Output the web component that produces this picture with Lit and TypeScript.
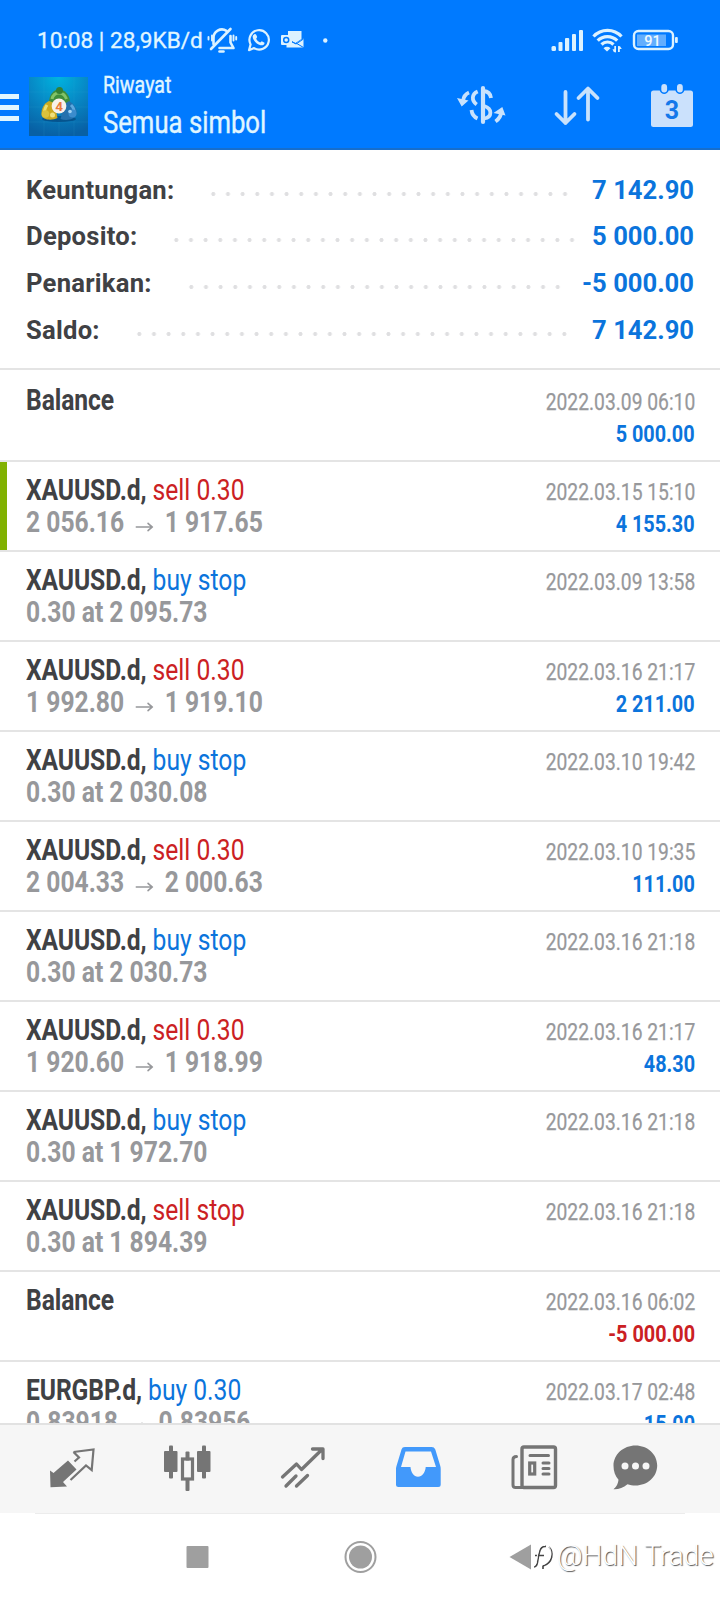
import { LitElement, html, css, svg } from "lit";
import { customElement } from "lit/decorators.js";

type Row = { s: string; side?: string; cls?: string; l2?: string; t: string; v?: string; neg?: boolean; mark?: boolean };

const rows: Row[] = [
  { s: "Balance", t: "2022.03.09 06:10", v: "5 000.00" },
  { s: "XAUUSD.d,", side: "sell 0.30", cls: "red", l2: "2 056.16|1 917.65", t: "2022.03.15 15:10", v: "4 155.30", mark: true },
  { s: "XAUUSD.d,", side: "buy stop", cls: "blue", l2: "0.30 at 2 095.73", t: "2022.03.09 13:58" },
  { s: "XAUUSD.d,", side: "sell 0.30", cls: "red", l2: "1 992.80|1 919.10", t: "2022.03.16 21:17", v: "2 211.00" },
  { s: "XAUUSD.d,", side: "buy stop", cls: "blue", l2: "0.30 at 2 030.08", t: "2022.03.10 19:42" },
  { s: "XAUUSD.d,", side: "sell 0.30", cls: "red", l2: "2 004.33|2 000.63", t: "2022.03.10 19:35", v: "111.00" },
  { s: "XAUUSD.d,", side: "buy stop", cls: "blue", l2: "0.30 at 2 030.73", t: "2022.03.16 21:18" },
  { s: "XAUUSD.d,", side: "sell 0.30", cls: "red", l2: "1 920.60|1 918.99", t: "2022.03.16 21:17", v: "48.30" },
  { s: "XAUUSD.d,", side: "buy stop", cls: "blue", l2: "0.30 at 1 972.70", t: "2022.03.16 21:18" },
  { s: "XAUUSD.d,", side: "sell stop", cls: "red", l2: "0.30 at 1 894.39", t: "2022.03.16 21:18" },
  { s: "Balance", t: "2022.03.16 06:02", v: "-5 000.00", neg: true },
  { s: "EURGBP.d,", side: "buy 0.30", cls: "blue", l2: "0.83918|0.83956", t: "2022.03.17 02:48", v: "15.00" },
];

const summary = [
  ["Keuntungan:", "7 142.90"],
  ["Deposito:", "5 000.00"],
  ["Penarikan:", "-5 000.00"],
  ["Saldo:", "7 142.90"],
];

const icon = (x: number, y: number, w: number, h: number, body: unknown) =>
  html`<svg width=${w} height=${h} viewBox="${x} ${y} ${w} ${h}" fill="none">${body}</svg>`;

const statusIcons = svg`
  <g stroke="#dcf2ff" stroke-width="2.600" stroke-linecap="round" stroke-linejoin="round">
    <path d="M213.500 44v-5.500a8.500 8.500 0 0 1 13-7.700M230.500 36v6.500l3 5.500h-14"/>
    <path d="M211 49L230.500 29"/><path d="M219.500 51.500h4"/>
    <path d="M212 35.500v5M208.500 37v2.500M233.500 35.500v5M236.200 37v2.500" stroke-width="1.900"/>
  </g>
  <path d="M249 50.200l1.600-5.800a9.700 9.700 0 1 1 3.500 3.700z" stroke="#dcf2ff" stroke-width="2.200" stroke-linejoin="round"/>
  <path d="M254 34.500c1.500-1 2.200-.2 3.200 2.600l-1 1.700c.9 1.800 2 2.900 4 3.700l1.600-1.300 2.700 1.500c.3 2.300-2.100 3-4 2.500-4.200-1.200-8-5.300-7.800-8.700 0-.9.500-1.500 1.300-2z" fill="#dcf2ff"/>
  <path d="M288 31h13.500v8l-6 4-7.500-4z" fill="#dcf2ff"/><path d="M286.500 47.500V40l9 4 7.500-4.500v8zM303.500 38.500v9l-7-4.500z" fill="#dcf2ff"/>
  <path d="M296 43l7.500 4.500M289 40l7 4 7.500-5" stroke="#0079fd"/>
  <rect x="281" y="35" width="11" height="10" rx="1" fill="#dcf2ff"/><circle cx="286.200" cy="40" r="2.500" stroke="#0079fd" stroke-width="1.500"/>
  <circle cx="325.300" cy="40.500" r="2.200" fill="#dcf2ff"/>`;

const signalIcons = svg`
  <g fill="#dcf2ff">
    <rect x="551.500" y="46" width="4.500" height="5" rx="1.500"/><rect x="558.500" y="42" width="4" height="9" rx="1"/>
    <rect x="565" y="38" width="4.200" height="13" rx="1"/><rect x="572" y="34" width="4" height="17" rx="1"/><rect x="579" y="30" width="4" height="21" rx="1"/>
    <path d="M607 51.500l-3.500-3.300a5 5 0 0 1 7 0z"/>
    <path d="M616 46v6.500l-2.200-.4-1.300-2.900h1.800V46zM618 52v-6l2 .3 1.800 2.700h-2V52z"/>
  </g>
  <g stroke="#dcf2ff" stroke-width="3.200"><path d="M593.500 36.500a19 19 0 0 1 28 0M597.700 40.700a13.500 13.500 0 0 1 19.500 0M601.500 44.500a8.500 8.500 0 0 1 12 0"/></g>
  <rect x="634" y="31" width="39" height="18" rx="4.500" stroke="#dcf2ff" stroke-width="2.400"/>
  <rect x="637" y="34.500" width="29" height="11.500" fill="#62aefe"/><rect x="675" y="37" width="2.800" height="6" rx="1" fill="#dcf2ff"/>
  <text x="652.500" y="46" text-anchor="middle" font-family="Roboto" font-weight="500" font-size="14.500" fill="#eefaff">91</text>`;

const logo = svg`
  <defs><radialGradient id="bg" cx=".5" cy="0" r="1"><stop offset="0" stop-color="#00b4df"/><stop offset=".5" stop-color="#0788c5"/><stop offset="1" stop-color="#0860a4"/></radialGradient></defs>
  <rect x="29" y="77" width="59" height="59" fill="url(#bg)"/>
  <path d="M29 92h59M29 107h59M29 122h59M44 77v59M59 77v59M74 77v59" stroke="#3bb0dc" stroke-opacity=".18" stroke-width=".8"/>
  <ellipse cx="59" cy="119" rx="17" ry="3" fill="#043e75" opacity=".6"/>
  <path d="M49 103c0-9 5-13.500 10-13.500s10.500 4.500 11 12l-6 6H53z" fill="#3f8e3a"/><path d="M52 99c1-4 4-6 7-6s6 2 7.500 6" stroke="#83c367" stroke-width="3"/><circle cx="59.500" cy="90.500" r="3.500" fill="#348034"/>
  <path d="M49 101c-5 2-8 8-7.500 14 1 5 10 6 16 3l-3-15z" fill="#cbaa20"/><path d="M47 105c-2 3-3 6-2 9" stroke="#ecdf70" stroke-width="3"/><circle cx="45.500" cy="114" r="3.800" fill="#d9c23c"/><circle cx="52.500" cy="115" r="2.500" fill="#efe07c"/>
  <path d="M69 101c5 3 8.500 8 7.500 13-2 6-10 7-16 5l4-15z" fill="#2471ae"/><path d="M71 105c2 2 3.500 5 3 8" stroke="#5ca9df" stroke-width="3"/><circle cx="72.500" cy="113.500" r="4" fill="#3b8ccd"/><circle cx="70" cy="111.500" r="1.800" fill="#a3d4f4"/>
  <circle cx="59" cy="106" r="7.400" fill="#f7f1ea"/>
  <text x="59" y="111" text-anchor="middle" font-family="Roboto" font-weight="700" font-size="13.500" fill="#ea7a3c">4</text>`;

const currency = svg`
  <g stroke="#c9e2fc" stroke-width="3.800">
    <path d="M483 88v34" stroke-width="4.200" stroke-linecap="round"/>
    <path d="M483.500 91c4 .3 7 2.600 7.500 7M477.700 91.500c-6 2.500-6.500 9-1 13M484 106c8.500 2.500 8.500 11 0 12.500M471.500 110c.5 4.500 2.500 7 6 8.500"/>
    <path d="M469 92.500c-3.500 1.500-5.500 4.500-6 8.500M495.500 121.500c3.500-2.500 5.500-5.500 5.800-9.500"/>
  </g>
  <path d="M457 98l11.500 2.500-6.800 6zM493.500 113l8.800-6 3.200 8.500z" fill="#c9e2fc"/>`;

const sort = svg`<path d="M565.500 92v31M556.500 114l9 9 9-9M588 119.500V89M578.500 98l9.500-9.500 9.500 9.500" stroke="#c9e2fc" stroke-width="3.800" stroke-linecap="round" stroke-linejoin="round"/>`;

const calendar = svg`
  <path d="M653.500 90.500h6.200c.8 2.300 2.500 3.500 4.500 3.500s3.700-1.200 4.500-3.500h6.700c.8 2.300 2.500 3.500 4.500 3.500s3.700-1.200 4.500-3.500h6.100a2.500 2.500 0 0 1 2.500 2.500v31.500a2.500 2.500 0 0 1-2.500 2.500h-37a2.500 2.500 0 0 1-2.500-2.500V93a2.500 2.500 0 0 1 2.500-2.500z" fill="#cbe1fc"/>
  <rect x="661.300" y="84" width="5.800" height="8.500" rx="2.900" fill="#cbe1fc"/><rect x="677" y="84" width="5.800" height="8.500" rx="2.900" fill="#cbe1fc"/>
  <text x="672" y="118.500" text-anchor="middle" font-family="Roboto" font-weight="700" font-size="25" fill="#1478ea">3</text>`;

const tabs = [
  [48, 48, svg`<path d="M50 1470.500l3.500 2.500 14.500-12.500 8.500 9-13.500 12.500 4 4.500-16.500.8z" fill="#757575"/><path d="M73.500 1452l20-2.500-1.800 20.500-5.700-4.500-15.500 14.500M73.500 1452l5.500 5.500-4.500 4" stroke="#757575" stroke-width="2.200"/>`],
  [163, 48, svg`<g fill="#757575"><rect x="164" y="1451" width="13.500" height="21" rx="1"/><rect x="169" y="1445.500" width="4" height="33" rx="1"/><rect x="197" y="1451" width="13.500" height="21" rx="1"/><rect x="202" y="1445.500" width="4" height="33" rx="1"/><rect x="185.500" y="1451.500" width="4" height="9" rx="1"/><rect x="185.500" y="1478" width="4" height="13" rx="1"/></g><rect x="182.500" y="1459" width="10" height="20" stroke="#757575" stroke-width="3.200"/>`],
  [279, 48, svg`<path d="M282.500 1477l14-13 5 5.500 20.500-20M312.500 1449h10.500v9.500M286 1486l10-10M296.500 1486l11-10.500" stroke="#757575" stroke-width="3.300" stroke-linecap="round" stroke-linejoin="round"/>`],
  [394, 48, svg`<path d="M405 1447h26.500c2 0 3 .8 3.800 2.500l5 16.500c.3 1 .4 1.800.4 2.700v15.800a2.500 2.500 0 0 1-2.500 2.500h-39.700a2.500 2.500 0 0 1-2.500-2.500v-15.800c0-.9.200-1.700.5-2.700l5-16.500c.7-1.700 1.500-2.500 3.500-2.500zM405.500 1451.500l-4.500 15.500h9.500c.2 5 3.300 9.700 7.500 9.700s7.500-4.700 7.700-9.700h10.300l-5-15.500z" fill-rule="evenodd" fill="#4299fb"/>`],
  [510, 48, svg`<g stroke="#757575" stroke-width="3.400" stroke-linejoin="round" stroke-linecap="round"><rect x="522" y="1447" width="33.500" height="40.500" rx="2"/><path d="M516.500 1456.500c-2.500 0-3.500 1-3.500 3v25.500c0 1.800.8 2.500 2.500 2.500h7.500M530 1455.500h18.500M543 1463h6M543 1468.500h6M543 1474h6" stroke-width="3"/><rect x="529.700" y="1463" width="5" height="11" stroke-width="3.200" stroke-linejoin="miter"/></g>`],
  [610, 50, svg`<path d="M635.500 1445.500c12 0 21.700 8.700 21.700 20s-9.700 20-21.700 20c-3 0-5.500-.5-8-1.300-4.500 3.500-9 5.300-14 5 3-2.500 4.800-6 5-9.500-3.300-3.600-5-8.500-5-14 0-11.300 10-20.200 22-20.200z" fill="#757575"/><g fill="#f6f6f6"><circle cx="625" cy="1466" r="3.500"/><circle cx="635.500" cy="1466" r="3.500"/><circle cx="646" cy="1466" r="3.500"/></g>`],
] as [number, number, unknown][];

@customElement("app-root")
export class AppRoot extends LitElement {
  static styles = css`
    :host { display: flex; flex-direction: column; width: 720px; height: 1600px; overflow: hidden; background: #fff; font-family: Roboto, sans-serif; color: #404144; position: relative; }
    svg { display: block; flex: none; }
    .top { height: 148px; flex: none; background: #007aff; border-bottom: 2px solid #176ecb; color: #e0f6ff; }
    .status { display: flex; height: 68px; box-sizing: border-box; padding-left: 37px; align-items: flex-start; }
    .clock { width: 167px; padding-top: 25px; font-size: 22.600px; line-height: 32px; white-space: nowrap; -webkit-text-stroke: .3px #e0f6ff; }
    .bar { display: flex; }
    .burger { width: 29px; display: flex; flex-direction: column; gap: 6px; padding-top: 26px; }
    .burger i { width: 18.5px; height: 5px; background: #e0f6ff; }
    .logo { padding-top: 9px; width: 74px; }
    .titles { width: 352px; white-space: nowrap; -webkit-text-stroke: .4px #e0f6ff; }
    .c { display: block; width: max-content; white-space: nowrap; transform: scaleX(.862); transform-origin: 0 50%; }
    .r { transform-origin: 100% 50%; margin-left: auto; }
    .small { font-size: 23.800px; line-height: 35px; transform: scaleX(.825); }
    .big { font-size: 30.500px; line-height: 40px; transform: scaleX(.842); }
    .acts { display: flex; gap: 45px; padding-top: 14px; }
    .sum { flex: none; border-bottom: 2px solid #e4e4e4; padding: 16.5px 26px 0; box-sizing: border-box; height: 220px; }
    .srow { display: flex; height: 46.700px; line-height: 46.700px; font-size: 25.600px; font-weight: 700; white-space: nowrap; }
    .key { letter-spacing: .25px; }
    .dots { flex: 1; margin: 19px 17px 0 32px; height: 16px; background: radial-gradient(circle at 7.300px 8px, #dfdfe1 1.700px, transparent 2.300px) 0 0 / 14.670px 16px repeat-x; }
    .blue { color: #0b74dc; } .red { color: #cb2023; }
    .list { flex: none; height: 1053px; padding-top: 2px; overflow: hidden; box-sizing: border-box; }
    .row { display: flex; justify-content: space-between; height: 90px; box-sizing: border-box; border-bottom: 2px solid #e4e4e4; padding: 12px 25px 0 26px; font-size: 28.600px; line-height: 32px; }
    .mark { box-shadow: inset 7px 0 #81b102; }
    .l1 b { font-weight: 700; letter-spacing: -.12px; }
    .l2 { color: #97989b; font-weight: 700; }
    .arrow { display: inline-block; width: 21px; margin: 0 12.500px 0 13.500px; vertical-align: 0; }
    .right { padding-top: 2px; font-size: 24px; }
    .time { color: #97989b; transform: scaleX(.803); -webkit-text-stroke: .25px #97989b; }
    .val { font-weight: 700; transform: scaleX(.826); }
    .tabs { flex: none; height: 90px; box-sizing: border-box; border-top: 2px solid #e2e2e2; background: #f6f6f6; display: grid; grid-template-columns: 115px 116px 115px 116px 100px 50px; padding: 15px 0 0 48px; }
    .nav { flex: 1; display: flex; padding: 27px 0 0 178px; gap: 118px; background: linear-gradient(#ececec, #ececec) 35px 0 / 650px 1px no-repeat; }
    .wm { position: absolute; left: 532px; top: 1536px; display: flex; align-items: center; gap: 3px; color: #fff; font-size: 28px; line-height: 40px; font-weight: 300; white-space: nowrap; text-shadow: 1px 1px 1px #555; }
  `;

  private l2(text: string) {
    const [a, b] = text.split("|");
    return b
      ? html`${a}<svg class="arrow" width="21" height="10" viewBox="0 0 21 10"><path d="M0 5h19M14 1l5.500 4-5.500 4" fill="none" stroke="#97989b" stroke-width="1.600"/></svg>${b}`
      : a;
  }

  render() {
    return html`
      <header class="top">
        <div class="status">
          <div class="clock">10:08 | 28,9KB/d</div>
          ${icon(204, 0, 346, 68, statusIcons)}${icon(550, 0, 130, 68, signalIcons)}
        </div>
        <div class="bar">
          <div class="burger"><i></i><i></i><i></i></div>
          <div class="logo">${icon(29, 77, 59, 59, logo)}</div>
          <div class="titles"><span class="c small">Riwayat</span><span class="c big">Semua simbol</span></div>
          <div class="acts">${icon(455, 82, 53, 48, currency)}${icon(553, 82, 48, 48, sort)}${icon(646, 82, 52, 48, calendar)}</div>
        </div>
      </header>
      <section class="sum">
        ${summary.map(([k, v]) => html`<div class="srow"><span class="key">${k}</span><span class="dots"></span><span class="blue">${v}</span></div>`)}
      </section>
      <main class="list">
        ${rows.map((r) => html`<div class="row ${r.mark ? "mark" : ""}">
          <div>
            <span class="c l1"><b>${r.s}</b>${r.side ? html` <span class=${r.cls!}>${r.side}</span>` : ""}</span>
            ${r.l2 ? html`<span class="c l2">${this.l2(r.l2)}</span>` : ""}
          </div>
          <div class="right">
            <span class="c r time">${r.t}</span>
            ${r.v ? html`<span class="c r val ${r.neg ? "red" : "blue"}">${r.v}</span>` : ""}
          </div>
        </div>`)}
      </main>
      <nav class="tabs">${tabs.map(([x, w, b]) => icon(x, 1440, w, 54, b))}</nav>
      <footer class="nav">
        ${icon(178, 1540, 40, 34, svg`<rect x="186.500" y="1546" width="22" height="22" rx="1" fill="#9f9f9f"/>`)}
        ${icon(336, 1540, 48, 34, svg`<circle cx="360.500" cy="1557" r="15" stroke="#9f9f9f" stroke-width="2"/><circle cx="360.500" cy="1557" r="11.500" fill="#9f9f9f"/>`)}
        ${icon(502, 1540, 40, 34, svg`<path d="M509.500 1557l21.500-12.500v25z" fill="#9f9f9f"/>`)}
      </footer>
      <div class="wm">
        <svg width="22" height="30" viewBox="0 0 22 30" fill="none">
          <path d="M2 26c4.500 0 3-7 5.500-15 1-4 3-6 6.500-5.500M3 14.500h9M17 6c5 5 4 16-6 19v3" stroke="#444" stroke-width="1.600"/>
          <path d="M1 25c4.500 0 3-7 5.500-15 1-4 3-6 6.500-5.500M16 5c5 5 4 16-6 19" stroke="#fff" stroke-width="1"/>
        </svg>
        <span>@HdN Trade</span>
      </div>`;
  }
}
